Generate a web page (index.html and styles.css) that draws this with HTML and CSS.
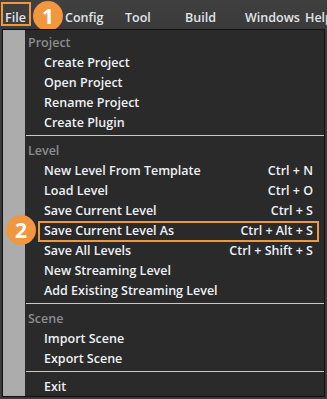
FILE: index.html
```html
<!DOCTYPE html>
<html lang="en">
<head>
    <meta charset="UTF-8">
    <title>File Menu</title>
    <link rel="stylesheet" href="styles.css">
</head>
<body>
    <div class="menubar">
        <span class="menu-item active">File</span>
        <span class="menu-item">Config</span>
        <span class="menu-item">Tool</span>
        <span class="menu-item">Build</span>
        <span class="menu-item">Windows</span>
        <span class="menu-item">Help</span>
        <span class="badge badge-one">1</span>
    </div>

    <div class="dropdown">
        <div class="strip"></div>
        <div class="content">
            <div class="section">Project</div>
            <div class="row"><span>Create Project</span></div>
            <div class="row"><span>Open Project</span></div>
            <div class="row"><span>Rename Project</span></div>
            <div class="row"><span>Create Plugin</span></div>
            <div class="separator"></div>

            <div class="section">Level</div>
            <div class="row"><span>New Level From Template</span><span class="key">Ctrl + N</span></div>
            <div class="row"><span>Load Level</span><span class="key">Ctrl + O</span></div>
            <div class="row"><span>Save Current Level</span><span class="key">Ctrl + S</span></div>
            <div class="row marked"><span>Save Current Level As</span><span class="key">Ctrl + Alt + S</span></div>
            <div class="row"><span>Save All Levels</span><span class="key">Ctrl + Shift + S</span></div>
            <div class="row"><span>New Streaming Level</span></div>
            <div class="row"><span>Add Existing Streaming Level</span></div>
            <div class="separator"></div>

            <div class="section">Scene</div>
            <div class="row"><span>Import Scene</span></div>
            <div class="row"><span>Export Scene</span></div>
            <div class="separator"></div>

            <div class="row"><span>Exit</span></div>
        </div>
        <span class="badge badge-two">2</span>
    </div>
</body>
</html>
```

FILE: styles.css
```css
body {
    margin: 0;
    background-color: #3b3b3b;
    font-family: "Open Sans", sans-serif;
    font-weight: 600;
    font-size: 12.5px;
    color: #eef0f4;
    width: 327px;
    height: 399px;
    overflow: hidden;
}

.menubar {
    position: relative;
    display: flex;
    height: 29px;
    padding-left: 5px;
    align-items: center;
    padding-top: 6px;
    box-sizing: border-box;
    background: linear-gradient(#404040, #3a3a3a);
    font-size: 12.5px;
    color: #e2e4e8;
    white-space: nowrap;
}

.menu-item {
    position: relative;
    width: 60px;
    flex-shrink: 0;
}

/* orange highlight around the File menu */
.menu-item.active::after {
    content: "";
    position: absolute;
    left: -4px;
    top: -7px;
    width: 26px;
    height: 20px;
    border: 2px solid #f0973f;
}

.badge {
    position: absolute;
    width: 30px;
    height: 30px;
    border-radius: 50%;
    background-color: #f0973f;
    color: #fff;
    font-family: "Open Sans", sans-serif;
    font-weight: bold;
    font-size: 21px;
    line-height: 30px;
    text-align: center;
}

.badge-one {
    left: 33px;
    top: 1px;
}

.dropdown {
    position: relative;
    display: flex;
    margin-left: 2px;
    width: 321px;
    height: 366px;
    border: 1px solid #101010;
}

.strip {
    width: 22px;
    background-color: #acacac;
}

.content {
    flex: 1;
    background-color: #2a2a2a;
    padding-top: 3px;
}

.section {
    height: 20px;
    line-height: 20px;
    padding-left: 3px;
    color: #8c8c8c;
}

.row {
    position: relative;
    display: flex;
    justify-content: space-between;
    height: 20px;
    line-height: 20px;
    padding-left: 19px;
    padding-right: 11px;
}

/* orange highlight around the pointed-out entry */
.row.marked::after {
    content: "";
    position: absolute;
    left: 13px;
    right: 5px;
    top: 0;
    bottom: -1px;
    border: 2px solid #f0973f;
}

.separator {
    height: 1px;
    margin: 2px 0 5px 1px;
    background-color: #c8c8c8;
}

.badge-two {
    left: 3px;
    top: 185px;
}
```
